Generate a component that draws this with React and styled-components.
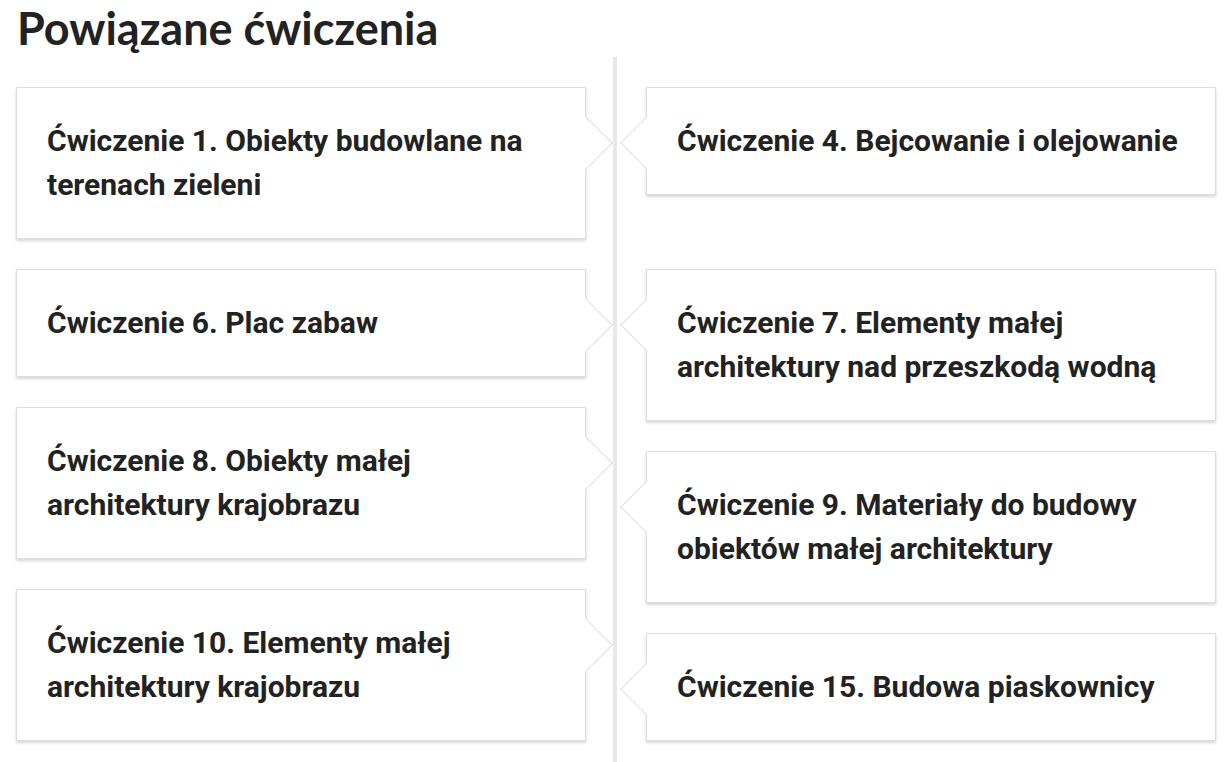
import React from "react";
import styled, { createGlobalStyle } from "styled-components";

const GlobalStyle = createGlobalStyle`
  body {
    margin: 0;
    background: #fff;
    font-family: "Roboto", "Liberation Sans", sans-serif;
    color: #222;
  }
`;

const Page = styled.div`
  padding: 0 16px;
`;

const Title = styled.h2`
  font-family: "Lato", "Liberation Sans", sans-serif;
  font-weight: 700;
  font-size: 45px;
  line-height: 57px;
  color: #222;
  margin: 0;
  padding-left: 1px;
`;

const Timeline = styled.ul`
  position: relative;
  list-style: none;
  margin: 0;
  padding: 0 0 30px;

  &::before {
    content: "";
    position: absolute;
    top: 0;
    bottom: -200px;
    left: 50%;
    width: 4px;
    margin-left: -3px;
    background: #e8e8e8;
  }

  &::after {
    content: "";
    display: block;
    clear: both;
  }
`;

const Item = styled.li`
  float: ${(p) => (p.$side === "left" ? "left" : "right")};
  clear: ${(p) => (p.$side === "left" ? "left" : "right")};
  width: 50%;
  box-sizing: border-box;
  margin-top: 30px;
  padding: ${(p) => (p.$side === "left" ? "0 30px 0 0" : "0 0 0 30px")};
`;

const Card = styled.a`
  position: relative;
  display: block;
  background: #fff;
  border: 1px solid #ddd;
  box-shadow: 0 2px 3px rgba(0, 0, 0, 0.16);
  padding: 31px 30px;
  font-size: 30px;
  font-weight: 700;
  line-height: 44px;
  color: #222;
  text-decoration: none;

  &::after {
    content: "";
    position: absolute;
    top: 36px;
    ${(p) => (p.$side === "left" ? "right: -19.5px;" : "left: -19.5px;")}
    width: 37px;
    height: 37px;
    background: #fff;
    transform: rotate(45deg);
    ${(p) =>
      p.$side === "left"
        ? "border-top: 1px solid #ddd; border-right: 1px solid #ddd;"
        : "border-bottom: 1px solid #ddd; border-left: 1px solid #ddd;"}
  }
`;

const exercises = [
  { side: "left", title: "Ćwiczenie 1. Obiekty budowlane na terenach zieleni" },
  { side: "right", title: "Ćwiczenie 4. Bejcowanie i olejowanie" },
  { side: "left", title: "Ćwiczenie 6. Plac zabaw" },
  { side: "right", title: "Ćwiczenie 7. Elementy małej architektury nad przeszkodą wodną" },
  { side: "left", title: "Ćwiczenie 8. Obiekty małej architektury krajobrazu" },
  { side: "right", title: "Ćwiczenie 9. Materiały do budowy obiektów małej architektury" },
  { side: "left", title: "Ćwiczenie 10. Elementy małej architektury krajobrazu" },
  { side: "right", title: "Ćwiczenie 15. Budowa piaskownicy" },
];

export default function App() {
  return (
    <Page>
      <GlobalStyle />
      <Title>Powiązane ćwiczenia</Title>
      <Timeline>
        {exercises.map((ex) => (
          <Item key={ex.title} $side={ex.side}>
            <Card $side={ex.side} href="#">
              {ex.title}
            </Card>
          </Item>
        ))}
      </Timeline>
    </Page>
  );
}
